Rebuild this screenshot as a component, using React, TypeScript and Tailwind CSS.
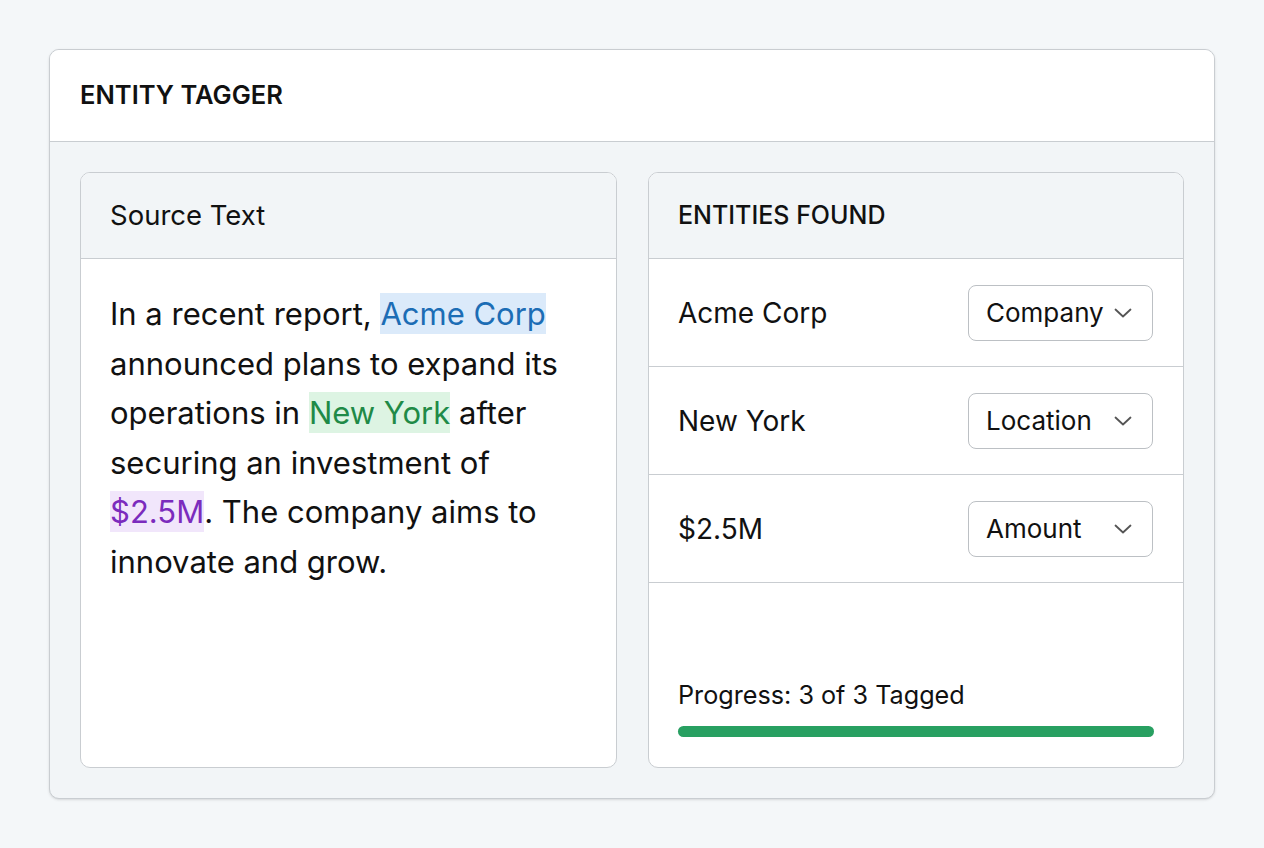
import React from "react";

const Chevron = () => (
  <svg width="18" height="10" viewBox="0 0 18 10" fill="none" stroke="#555" strokeWidth="1.8" strokeLinecap="round" strokeLinejoin="round">
    <path d="M1.5 1.5l7.5 7 7.5-7" />
  </svg>
);

const rows = [
  { name: "Acme Corp", type: "Company" },
  { name: "New York", type: "Location" },
  { name: "$2.5M", type: "Amount" },
];

export default function App() {
  return (
    <div className="min-h-[848px] w-full bg-[#f4f7f9] p-[49px]" style={{ fontFamily: "Inter, 'Noto Sans', sans-serif" }}>
      <div className="flex h-[750px] flex-col overflow-hidden rounded-[10px] border border-[#c9cdd1] bg-[#f2f5f7] shadow-sm">
        <div className="flex h-[92px] shrink-0 items-center border-b border-[#c9cdd1] bg-white pl-[30px]">
          <h1 className="text-[25.5px] font-semibold text-[#111]">ENTITY TAGGER</h1>
        </div>
        <div className="flex flex-1 gap-[31px] p-[30px]">
          <div className="flex w-[537px] flex-col overflow-hidden rounded-[10px] border border-[#c9cdd1] bg-white">
            <div className="flex h-[86px] shrink-0 items-center border-b border-[#c9cdd1] bg-[#f2f5f7] pl-[29px]">
              <span className="text-[27.5px] text-[#111]">Source Text</span>
            </div>
            <div className="pl-[29px] pr-[28px] pt-[30px]">
              <p className="text-[31px] leading-[49.5px] text-[#111]">
                In a recent report,{" "}
                <span className="bg-[#dbeafa] py-[2px] text-[#1c6db5]">Acme Corp</span> announced plans to expand its operations in{" "}
                <span className="bg-[#ddf4e3] py-[2px] text-[#1f8a47]">New York</span> after securing an investment of{" "}
                <span className="bg-[#f1e6fb] py-[2px] text-[#7b2bbd]">$2.5M</span>. The company aims to innovate and grow.
              </p>
            </div>
          </div>
          <div className="flex w-[536px] flex-col overflow-hidden rounded-[10px] border border-[#c9cdd1] bg-white">
            <div className="flex h-[86px] shrink-0 items-center border-b border-[#c9cdd1] bg-[#f2f5f7] pl-[29px]">
              <span className="text-[25px] font-medium text-[#111]">ENTITIES FOUND</span>
            </div>
            {rows.map((r) => (
              <div key={r.name} className="flex h-[108px] shrink-0 items-center justify-between border-b border-[#c9cdd1] pl-[29px] pr-[30px]">
                <span className="text-[28px] text-[#111]">{r.name}</span>
                <div className="flex h-[56px] w-[185px] items-center justify-between rounded-[8px] border border-[#bcc0c4] bg-white pl-[17px] pr-[20px]">
                  <span className="text-[26px] text-[#111]">{r.type}</span>
                  <Chevron />
                </div>
              </div>
            ))}
            <div className="flex flex-1 flex-col justify-end px-[29px] pb-[30px]">
              <span className="text-[25.2px] leading-[36px] text-[#111]">Progress: 3 of 3 Tagged</span>
              <div className="mt-[13px] h-[11px] w-full rounded-full bg-[#e5e7eb]">
                <div className="h-full rounded-full bg-[#28a061]" style={{ width: "100%" }} />
              </div>
            </div>
          </div>
        </div>
      </div>
    </div>
  );
}
